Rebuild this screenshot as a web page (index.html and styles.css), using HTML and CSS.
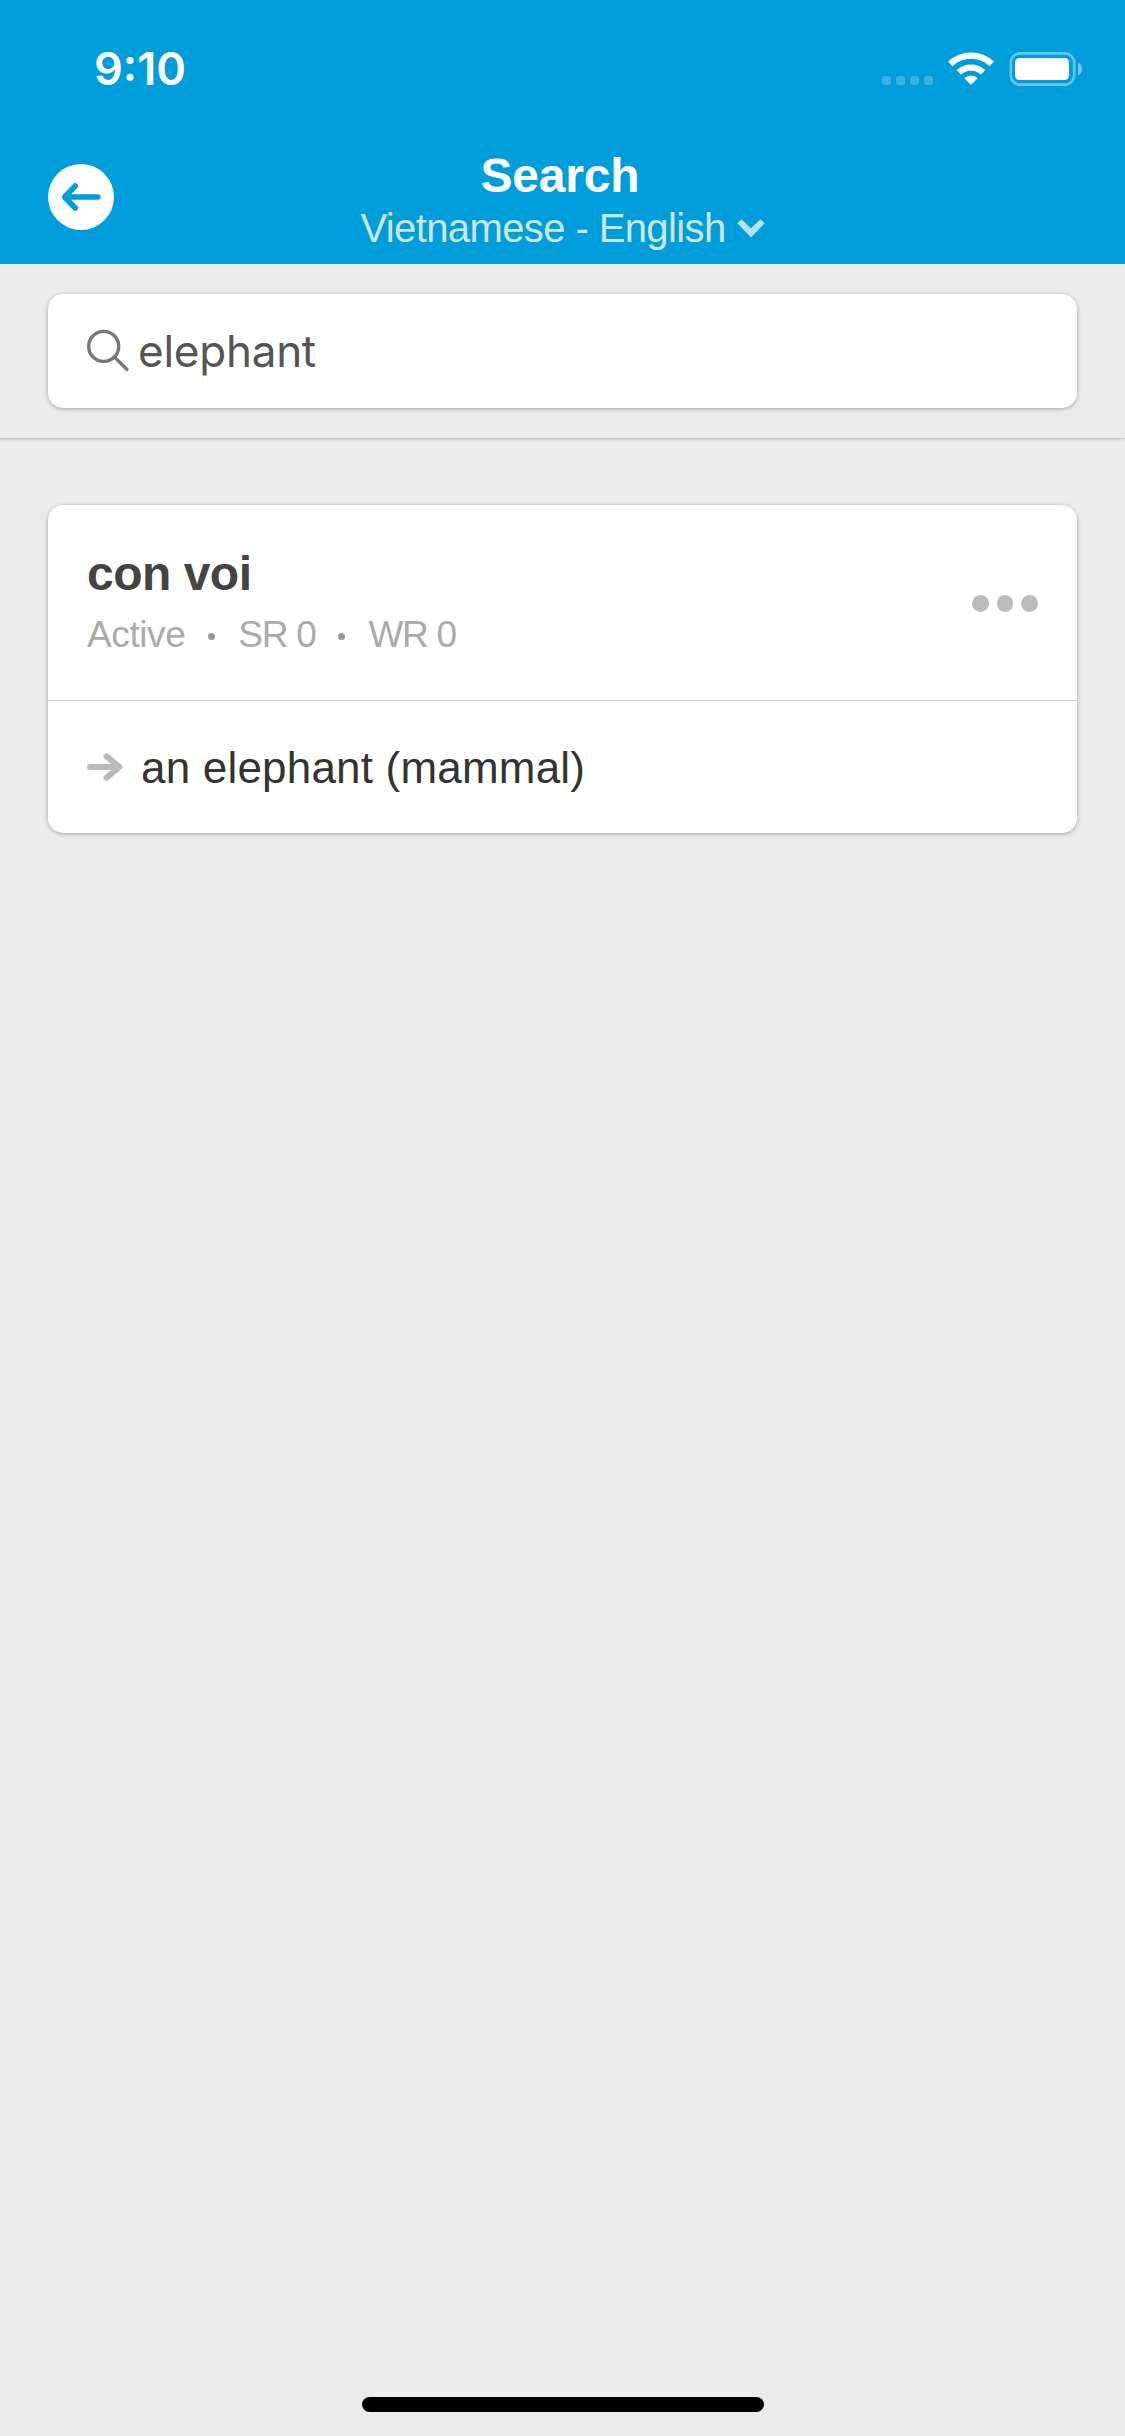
FILE: index.html
```html
<!DOCTYPE html>
<html lang="en">
<head>
<meta charset="utf-8">
<title>Search</title>
<link rel="stylesheet" href="styles.css">
</head>
<body>
<div class="screen">
  <header class="header">
    <div class="status">
      <span class="time">9:10</span>
      <svg class="status-icons" width="202" height="36" viewBox="0 0 202 36">
        <g fill="#fff" opacity=".22">
          <rect x="1" y="25" width="9" height="9" rx="3.2"/><rect x="15" y="25" width="9" height="9" rx="3.2"/><rect x="29" y="25" width="9" height="9" rx="3.2"/><rect x="43" y="25" width="9" height="9" rx="3.2"/>
        </g>
        <g fill="none" stroke="#fff">
          <path stroke-width="6.4" d="M69.3 12.9a30 30 0 0 1 41.4 0"/>
          <path stroke-width="6.2" d="M77.8 21.3a18 18 0 0 1 24.4 0"/>
        </g>
        <path fill="#fff" stroke="#fff" stroke-width="1" stroke-linejoin="round" d="M83.9 27.3a9.4 9.4 0 0 1 12.2 0L90 33.4Z"/>
        <rect x="129.8" y="2.3" width="63.4" height="31.4" rx="9.5" fill="none" stroke="#fff" stroke-width="2.7" opacity=".4"/>
        <rect x="134" y="7" width="54" height="22" rx="4.5" fill="#fff"/>
        <path fill="#fff" opacity=".45" d="M197 11.8q4 1.8 4 6.2t-4 6.2Z"/>
      </svg>
    </div>
    <nav class="nav">
      <button class="back" aria-label="Back">
        <svg width="66" height="66" viewBox="0 0 66 66">
          <circle cx="33" cy="33" r="33" fill="#fff"/>
          <path class="back-arrow" d="M49.8 33H20M27.2 22L16.6 33l10.6 11"/>
        </svg>
      </button>
      <div class="heading">
        <h1 class="title">Search</h1>
        <div class="languages">
          <span class="pair">Vietnamese - English</span>
          <svg class="chevron" width="28" height="19" viewBox="0 0 28 19"><path fill="#b3e2f4" d="M.3 4.2L4.6.2 14 9.2 23.4.2l4.3 4L14 18.6Z"/></svg>
        </div>
      </div>
    </nav>
  </header>
  <section class="search">
    <div class="field">
      <svg width="44" height="44" viewBox="0 0 44 44" fill="none" stroke="#777" stroke-width="3.4" stroke-linecap="round"><circle cx="16.7" cy="17.4" r="15"/><path d="M27.7 28.4L40 40.5"/></svg>
      <span class="query">elephant</span>
    </div>
  </section>
  <main class="results">
    <article class="card">
      <div class="entry">
        <div>
          <h2 class="word">con voi</h2>
          <div class="meta"><span class="active">Active</span><i class="dot"></i><span>SR 0</span><i class="dot"></i><span>WR 0</span></div>
        </div>
        <div class="more"><i></i><i></i><i></i></div>
      </div>
      <div class="meaning">
        <svg width="36" height="28" viewBox="0 0 36 28" fill="none" stroke="#bbb" stroke-width="6" stroke-linecap="round" stroke-linejoin="round"><path d="M3 14h28M19.6 3.4L32.4 14 19.6 24.6"/></svg>
        <span class="translation">an elephant (mammal)</span>
      </div>
    </article>
  </main>
  <div class="home"></div>
</div>
</body>
</html>
```
FILE: styles.css
```css
* { box-sizing: border-box; }
body { margin: 0; background: #ebebeb; font-family: "Liberation Sans", Arial, sans-serif; }
h1, h2 { margin: 0; }
svg { display: block; flex: none; }

.screen { width: 1125px; height: 2436px; display: flex; flex-direction: column; }

.header { height: 264px; background: #009ddb; color: #fff; }
.status { height: 132px; padding: 44px 42px 0 94px; display: flex; justify-content: space-between; align-items: flex-start; }
.time { font: 600 45px/50px Inter, sans-serif; }
.status-icons { margin-top: 7px; }

.nav { height: 132px; padding: 16px 48px 0; display: grid; grid-template-columns: 66px 1fr 66px; }
.back { width: 66px; height: 66px; margin-top: 16px; padding: 0; border: 0; background: none; }
.back-arrow { fill: none; stroke: #009ddb; stroke-width: 5.6; stroke-linecap: round; stroke-linejoin: round; }
.title { text-align: center; font-size: 48px; line-height: 56px; letter-spacing: -0.2px; margin-right: 5px; }
.languages { margin-top: 1px; display: flex; justify-content: center; align-items: center; gap: 11px; }
.pair { font-size: 40px; line-height: 46px; letter-spacing: -0.6px; color: #cce6e6; }

.search { height: 175px; padding: 30px 48px 0; border-bottom: 1px solid #c4c4c4; box-shadow: 0 1px 3px rgba(0, 0, 0, .1); }
.field { height: 114px; padding: 0 39px; display: flex; align-items: center; gap: 7px; background: #fff; border-radius: 15px; box-shadow: 0 1px 4px rgba(0, 0, 0, .3); }
.query { font: 400 44px/52px Inter, sans-serif; letter-spacing: -0.25px; color: #555; }

.results { flex: 1; padding: 66px 48px 0; }
.card { background: #fff; border-radius: 15px; box-shadow: 0 1px 4px rgba(0, 0, 0, .3); }
.entry { height: 196px; padding: 41px 39px 0; display: flex; justify-content: space-between; border-bottom: 1px solid #d0d0d0; }
.word { font-size: 48px; line-height: 56px; letter-spacing: -0.5px; color: #444; }
.meta { margin-top: 11px; display: flex; align-items: center; font-size: 37px; line-height: 44px; letter-spacing: -1.3px; color: #aaa; }
.active { letter-spacing: -0.4px; }
.dot { width: 7px; height: 7px; margin: 2px 23px 0; border-radius: 50%; background: #999; }
.more { height: 17px; margin-top: 49px; display: flex; gap: 8px; }
.more i { width: 16.7px; height: 16.7px; border-radius: 50%; background: #bbb; }
.meaning { height: 132px; padding: 0 39px; display: flex; align-items: center; gap: 18px; }
.translation { padding-top: 2px; font-size: 44px; line-height: 50px; letter-spacing: .2px; color: #333; }

.home { width: 402px; height: 15px; margin: 0 auto 24px; border-radius: 8px; background: #000; }
```
